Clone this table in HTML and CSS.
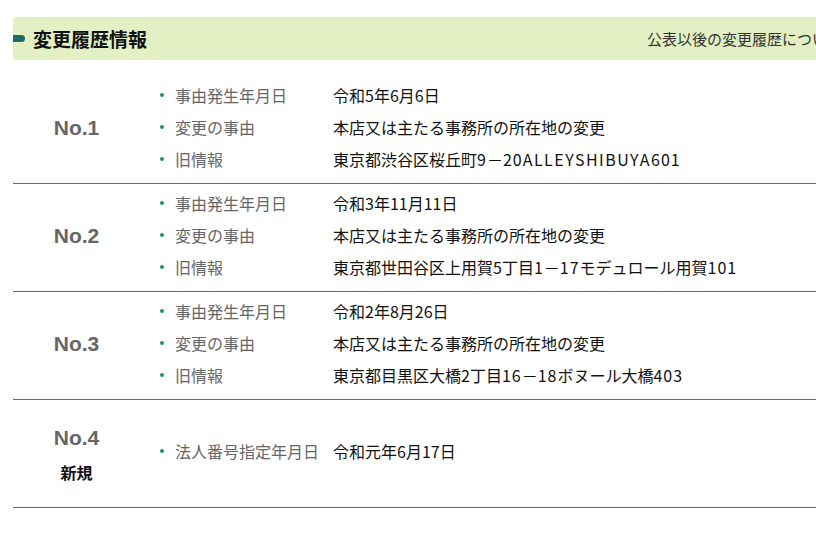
FILE: index.html
```html
<!DOCTYPE html>
<html lang="ja">
<head>
<meta charset="utf-8">
<link rel="stylesheet" href="styles.css">
</head>
<body>
<div class="page">
  <div class="head">
    <h2 class="title"><span class="marker"></span>変更履歴情報</h2>
    <p class="note">公表以後の変更履歴について</p>
  </div>
  <div class="list">
    <div class="row">
      <div class="no"><span class="num">No.1</span></div>
      <ul class="items">
        <li><span class="label">事由発生年月日</span><span class="value">令和5年6月6日</span></li>
        <li><span class="label">変更の事由</span><span class="value">本店又は主たる事務所の所在地の変更</span></li>
        <li><span class="label">旧情報</span><span class="value">東京都渋谷区桜丘町<span class="fd">９</span>－<span class="fd">２０</span><span class="wide">ALLEYSHIBUYA</span><span class="fd">６０１</span></span></li>
      </ul>
    </div>
    <div class="row">
      <div class="no"><span class="num">No.2</span></div>
      <ul class="items">
        <li><span class="label">事由発生年月日</span><span class="value">令和3年11月11日</span></li>
        <li><span class="label">変更の事由</span><span class="value">本店又は主たる事務所の所在地の変更</span></li>
        <li><span class="label">旧情報</span><span class="value">東京都世田谷区上用賀5丁目<span class="fd">１</span>－<span class="fd">１７</span>モデュロール用賀<span class="fd">１０１</span></span></li>
      </ul>
    </div>
    <div class="row">
      <div class="no"><span class="num">No.3</span></div>
      <ul class="items">
        <li><span class="label">事由発生年月日</span><span class="value">令和2年8月26日</span></li>
        <li><span class="label">変更の事由</span><span class="value">本店又は主たる事務所の所在地の変更</span></li>
        <li><span class="label">旧情報</span><span class="value">東京都目黒区大橋2丁目<span class="fd">１６</span>－<span class="fd">１８</span>ボヌール大橋<span class="fd">４０３</span></span></li>
      </ul>
    </div>
    <div class="row">
      <div class="no stacked"><span class="num">No.4</span><span class="new">新規</span></div>
      <ul class="items">
        <li><span class="label">法人番号指定年月日</span><span class="value">令和元年6月17日</span></li>
      </ul>
    </div>
  </div>
</div>
</body>
</html>
```
FILE: styles.css
```css
html, body {
  margin: 0;
  padding: 0;
  background: #fff;
  overflow: hidden;
}
body {
  font-family: "Noto Sans CJK JP", "Liberation Sans", sans-serif;
  color: #111;
}
.page {
  padding: 17px 0 0 13px;
}
.head {
  display: flex;
  align-items: center;
  height: 43px;
  background: #e2f0c4;
  border-radius: 4px 0 0 4px;
  white-space: nowrap;
  overflow: hidden;
}
.title {
  flex: 0 0 634px;
  display: flex;
  align-items: center;
  margin: 0;
  font-size: 19px;
  font-weight: bold;
  color: #111;
  line-height: 1;
}
.marker {
  width: 12px;
  height: 7px;
  border-radius: 0 4px 4px 0;
  background: #1d6b6b;
  margin-right: 8px;
}
.note {
  flex: 0 0 auto;
  margin: 0;
  font-size: 15px;
  color: #333;
}
.list {
  margin-top: 16px;
}
.row {
  display: flex;
  align-items: center;
  height: 103px;
  padding-bottom: 4px;
  border-bottom: 1px solid #1f8f6c;
}
.no {
  flex: 0 0 127px;
  display: flex;
  flex-direction: column;
  align-items: center;
  gap: 9px;
}
.no.stacked {
  padding-top: 3px;
}
.num {
  font-family: "Liberation Sans", Arial, sans-serif;
  font-weight: bold;
  font-size: 21px;
  color: #666;
  line-height: 28px;
}
.new {
  font-size: 16px;
  font-weight: bold;
  color: #111;
  line-height: 22px;
}
.items {
  list-style: none;
  margin: 0 0 2px;
  padding: 0 0 0 20px;
}
.items li {
  display: flex;
  align-items: center;
  height: 32px;
  font-size: 16px;
  white-space: nowrap;
}
.items li::before {
  content: "";
  width: 4px;
  height: 4px;
  border-radius: 50%;
  background: #1f8f6c;
  margin-right: 11px;
}
.label {
  width: 158px;
  color: #666;
}
.value {
  color: #111;
}
.fd {
  font-feature-settings: "pwid" 1;
  letter-spacing: 1px;
}
.wide {
  letter-spacing: 1.5px;
}
```
